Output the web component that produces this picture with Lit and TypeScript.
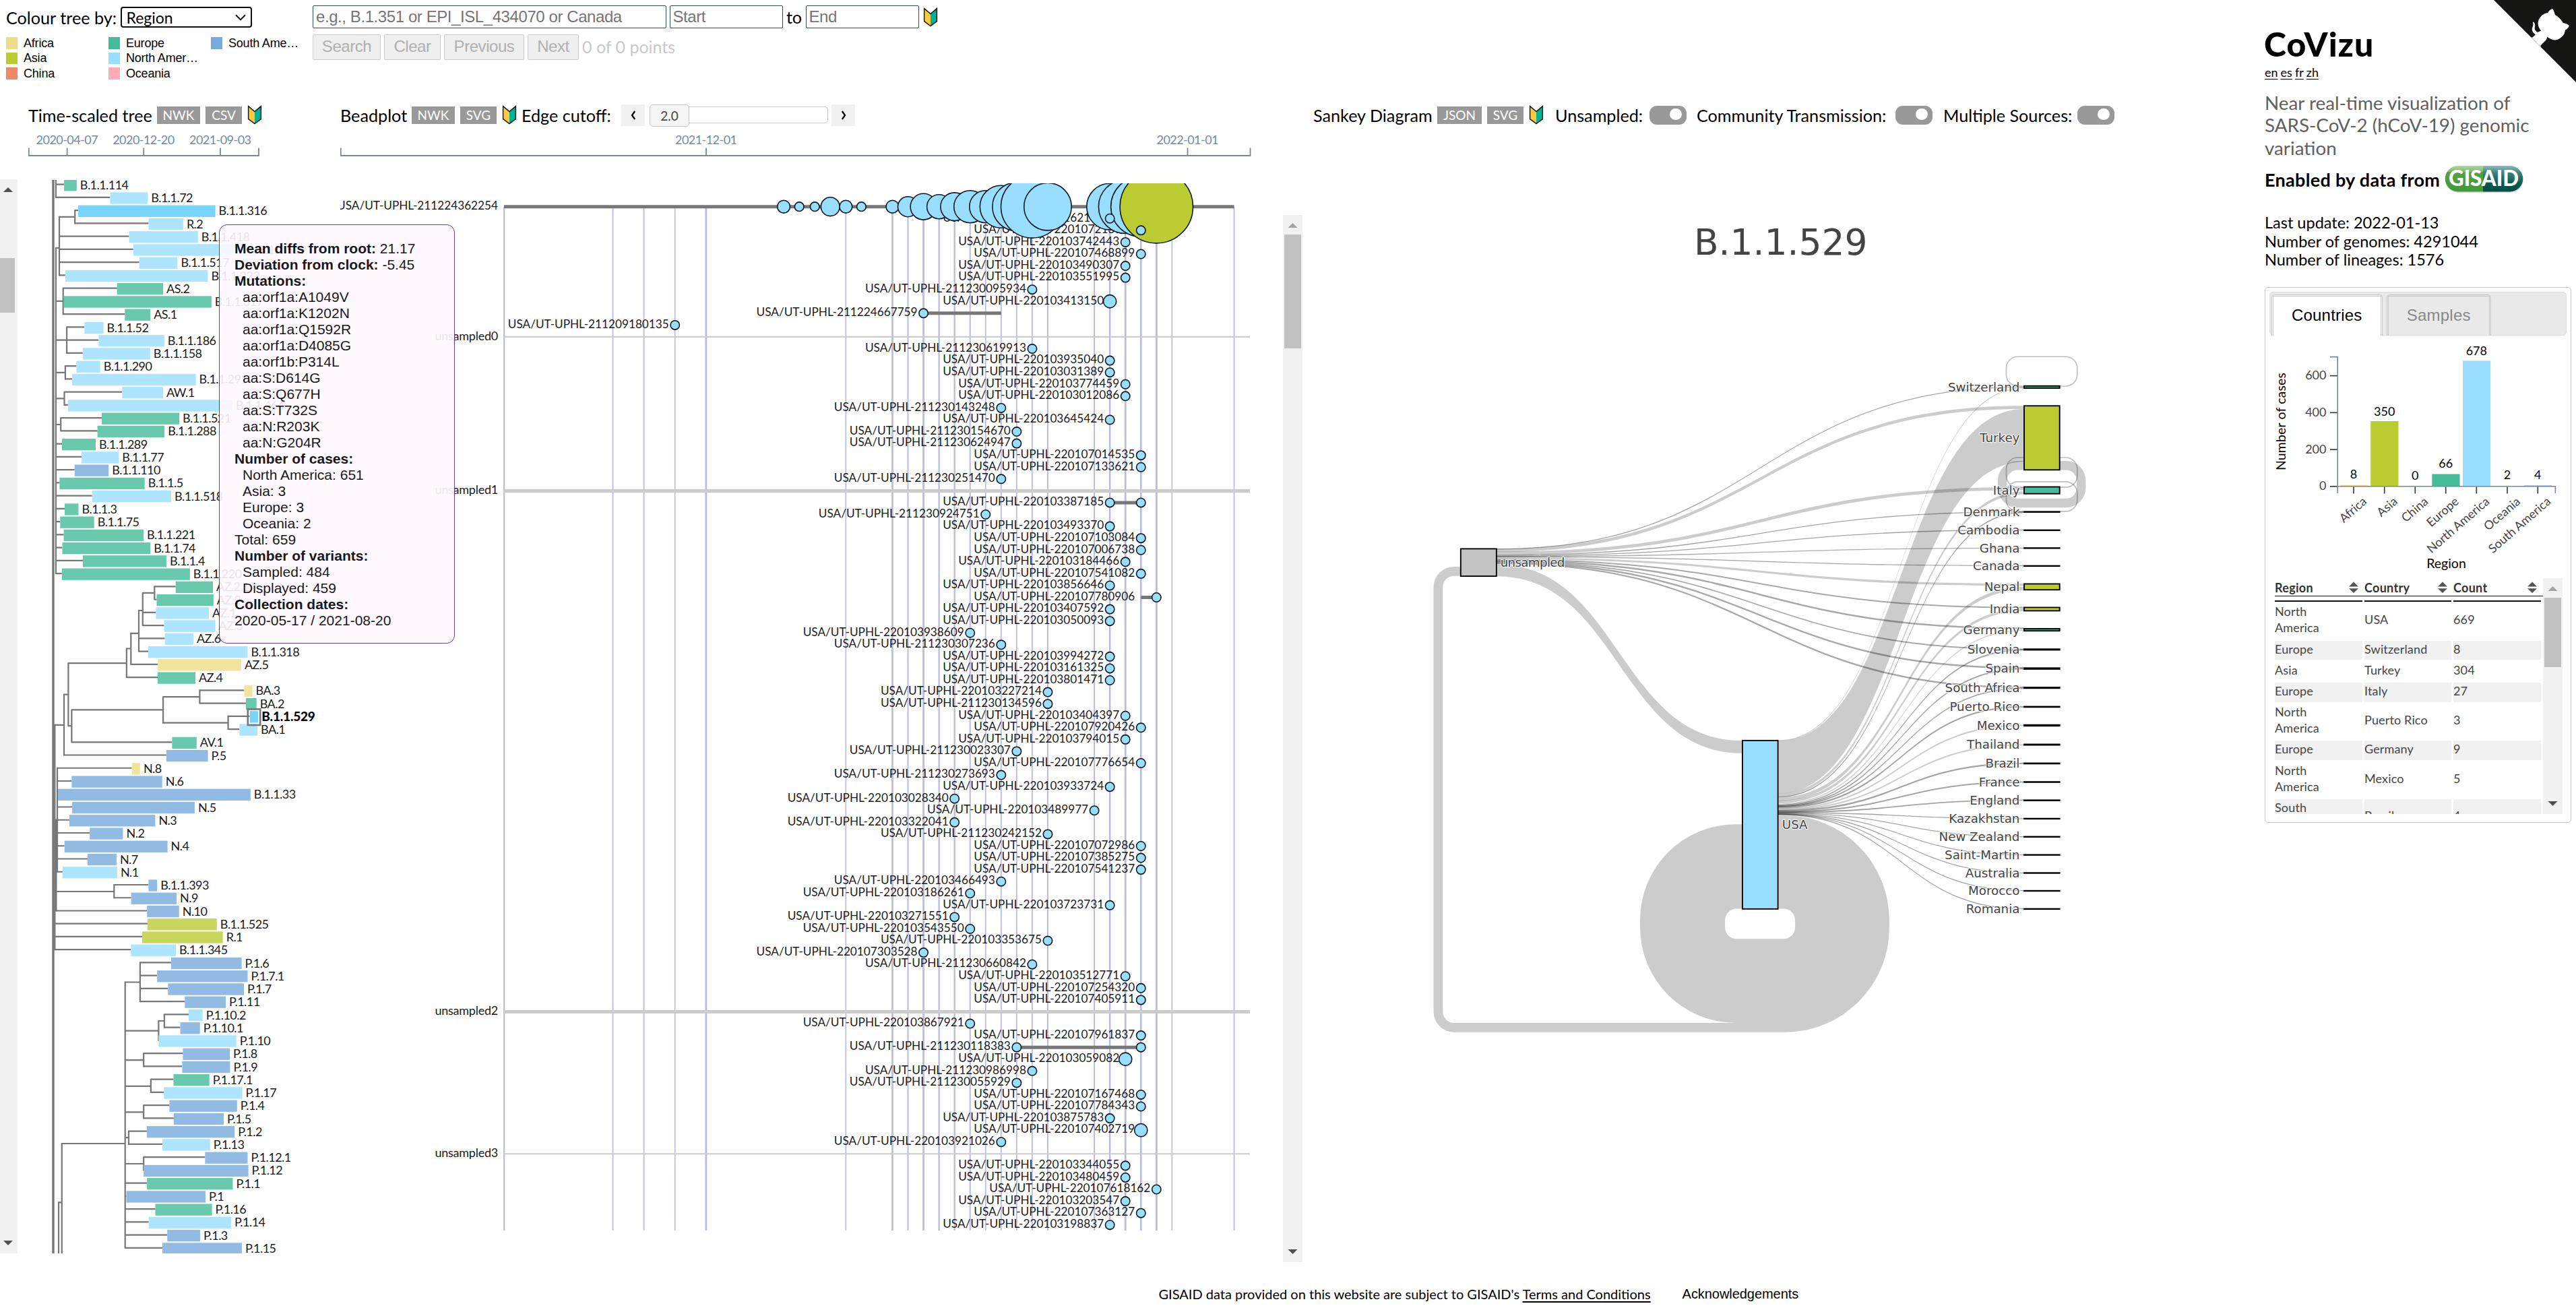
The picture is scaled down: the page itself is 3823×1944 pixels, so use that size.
import { LitElement, html, svg, css } from "lit";
import { customElement } from "lit/decorators.js";

const COLOURS: Record<string, string> = {
  Af: "#f1e4a0",
  As: "#c9d65c",
  Eu: "#69c9ad",
  NA: "#ade4ff",
  SA: "#92bbe4",
  HI: "#77d5fa",
};

/* lineage, region, first x, last x, parent x */
type Leaf = [string, string, number, number, number];
const LEAVES: Leaf[] = [
  ["B.1.1.114", "Eu", 95.1, 113.8, 83],
  ["B.1.1.72", "NA", 163.4, 219.2, 83],
  ["B.1.1.316", "HI", 116.1, 319.6, 111.2],
  ["R.2", "NA", 220.5, 271.9, 111.2],
  ["B.1.1.418", "NA", 191.5, 293.8, 88],
  ["B.1.1.519", "NA", 197.8, 378, 88],
  ["B.1.1.517", "NA", 206.7, 263.4, 88],
  ["B.1.1.222", "NA", 96.9, 308.5, 88],
  ["AS.2", "Eu", 173.7, 242, 93.7],
  ["B.1.1.317", "Eu", 94.6, 313.8, 93.7],
  ["AS.1", "Eu", 185.3, 223.2, 93.7],
  ["B.1.1.52", "NA", 125.4, 153.6, 99.1],
  ["B.1.1.186", "NA", 146.4, 243.8, 99.1],
  ["B.1.1.158", "NA", 122.8, 222.8, 99.1],
  ["B.1.1.290", "NA", 113.4, 148.7, 96.9],
  ["B.1.1.291", "NA", 107.1, 290.6, 96.9],
  ["AW.1", "NA", 181.3, 242, 95.5],
  ["B.1.1.464", "NA", 100.9, 345, 95.5],
  ["B.1.1.521", "Eu", 150.9, 266, 90.2],
  ["B.1.1.288", "Eu", 144.6, 244.2, 90.2],
  ["B.1.1.289", "Eu", 92, 142, 83],
  ["B.1.1.77", "NA", 121, 176.3, 83],
  ["B.1.1.110", "SA", 110.7, 161.2, 83],
  ["B.1.1.5", "Eu", 88.4, 214.7, 83],
  ["B.1.1.518", "NA", 136.6, 254, 83],
  ["B.1.1.3", "Eu", 96, 116.5, 83],
  ["B.1.1.75", "Eu", 89.3, 139.7, 83],
  ["B.1.1.221", "Eu", 94.6, 213, 83],
  ["B.1.1.74", "Eu", 92.5, 223.2, 83],
  ["B.1.1.4", "Eu", 122.9, 247.1, 83],
  ["B.1.1.220", "Eu", 91.8, 281.8, 83],
  ["AZ.2.1", "Eu", 260.7, 316, 229.3],
  ["AZ.2", "Eu", 232.5, 316.8, 229.3],
  ["AZ.1", "NA", 231.4, 310, 211.8],
  ["AZ.3", "NA", 243.6, 319.6, 211.8],
  ["AZ.6", "NA", 244.6, 287.1, 206],
  ["B.1.1.318", "NA", 220, 367.5, 206],
  ["AZ.5", "Af", 234.3, 357.9, 194.3],
  ["AZ.4", "Eu", 234, 290, 187.9],
  ["BA.3", "Af", 362.5, 374.6, 296.4],
  ["BA.2", "Eu", 365, 380.7, 296.4],
  ["B.1.1.529", "HI", 370.7, 383.2, 338.6],
  ["BA.1", "NA", 355.4, 382.1, 338.6],
  ["AV.1", "Eu", 255.4, 291.8, 106.4],
  ["P.5", "SA", 246.8, 308.6, 95],
  ["N.8", "Af", 195.7, 207.9, 85],
  ["N.6", "SA", 106.4, 240.7, 85],
  ["B.1.1.33", "SA", 86, 371.8, 85],
  ["N.5", "SA", 107.1, 288.9, 85],
  ["N.3", "SA", 102.9, 230.4, 85],
  ["N.2", "SA", 133.2, 182.5, 85],
  ["N.4", "SA", 95.7, 248.6, 85],
  ["N.7", "SA", 130, 172.9, 85],
  ["N.1", "NA", 92.9, 173.9, 85],
  ["B.1.1.393", "SA", 220.4, 233.2, 169.3],
  ["N.9", "SA", 194.6, 262.1, 169.3],
  ["N.10", "SA", 218.2, 265.7, 83.6],
  ["B.1.1.525", "As", 218.9, 321.8, 81.4],
  ["R.1", "As", 211, 330.7, 81.4],
  ["B.1.1.345", "NA", 194.3, 261, 81.4],
  ["P.1.6", "SA", 253.9, 358.6, 207.9],
  ["P.1.7.1", "SA", 233.2, 367.5, 207.9],
  ["P.1.7", "SA", 249.3, 362.1, 207.9],
  ["P.1.11", "SA", 274.3, 335, 207.9],
  ["P.1.10.2", "NA", 280, 300.7, 243.9],
  ["P.1.10.1", "SA", 267.5, 296.8, 243.9],
  ["P.1.10", "NA", 235.4, 350.7, 235.4],
  ["P.1.8", "SA", 271.4, 341, 213.2],
  ["P.1.9", "SA", 270.4, 341.4, 213.2],
  ["P.1.17.1", "Eu", 257.5, 310.7, 223.9],
  ["P.1.17", "NA", 243.2, 359.6, 223.9],
  ["P.1.4", "SA", 251.4, 351.8, 213.2],
  ["P.1.5", "SA", 257.9, 332, 213.2],
  ["P.1.2", "SA", 217.9, 348.2, 191],
  ["P.1.13", "NA", 241, 311.8, 191],
  ["P.1.12.1", "SA", 304.3, 367.5, 213.2],
  ["P.1.12", "SA", 213.2, 368.6, 213.2],
  ["P.1.1", "Eu", 218.2, 345.4, 185.7],
  ["P.1", "SA", 187.5, 305, 185.7],
  ["P.1.16", "Eu", 230.4, 314.6, 185.7],
  ["P.1.14", "NA", 220.7, 342.9, 185.7],
  ["P.1.3", "SA", 248.2, 297.1, 185.7],
  ["P.1.15", "SA", 241, 358.9, 185.7],
];
const leafTop = (i: number) => 266.1 + 19.246 * i;
const leafY = (i: number) => leafTop(i) + 7.6;

/* node x, top y, bottom y */
const STEMS: [number, number, number][] = [
  [83, 262, leafY(1)],
  [83, 368, leafY(30)],
  [111.2, leafY(2), leafY(3)],
  [88, 321.8, leafY(7)],
  [93.7, leafY(8), leafY(10)],
  [99.1, leafY(11), leafY(13)],
  [96.9, leafY(14), leafY(15)],
  [95.5, leafY(16), leafY(17)],
  [90.2, leafY(18), leafY(19)],
  [229.3, leafY(31), leafY(32)],
  [211.8, 879.9, leafY(34)],
  [206, 906, leafY(36)],
  [194.3, 939.8, leafY(37)],
  [187.9, 962.5, leafY(38)],
  [101.4, 984.2, 1077.2],
  [95, 1030.7, leafY(44)],
  [106.4, 1053.4, leafY(43)],
  [242.1, 1034.2, 1072.7],
  [296.4, leafY(39), leafY(40)],
  [338.6, leafY(41), leafY(42)],
  [85, leafY(45), leafY(53)],
  [83.4, 1217, leafY(56)],
  [81.4, 1075.8, leafY(59)],
  [169.3, leafY(54), leafY(55)],
  [207.9, leafY(60), leafY(63)],
  [243.9, leafY(64), leafY(65)],
  [235.4, 1515, leafY(66)],
  [213.2, leafY(67), leafY(68)],
  [223.9, leafY(69), leafY(70)],
  [213.2, leafY(71), leafY(72)],
  [191, leafY(73), leafY(74)],
  [213.2, leafY(75), leafY(76)],
  [185.7, 1457.5, leafY(82)],
  [91.8, 1697, 1864],
  [87, 1784.3, 1864],
];
/* y, start x, end x */
const BRANCHES: [number, number, number][] = [
  [321.8, 88, 111.2],
  [368, 83, 88],
  [leafY(9), 83, 93.7],
  [leafY(12), 83, 99.1],
  [552.9, 83, 96.9],
  [591.4, 83, 95.5],
  [630, 83, 90.2],
  [879.9, 211.8, 229.3],
  [906, 206, 211.8],
  [939.8, 194.3, 206],
  [962.5, 187.9, 194.3],
  [984.2, 101.4, 187.9],
  [1030.7, 95, 101.4],
  [1075.8, 81, 95],
  [1077.2, 101.4, 106.4],
  [1053.4, 106.4, 242.1],
  [1034.2, 242.1, 296.4],
  [1072.7, 242.1, 338.6],
  [1216.7, 81.4, 85],
  [1323, 83.6, 169.3],
  [1457.5, 185.7, 207.9],
  [1515, 235.4, 243.9],
  [1529.6, 185.7, 235.4],
  [1573.2, 185.7, 213.2],
  [1611.8, 185.7, 223.9],
  [1650.4, 185.7, 213.2],
  [1688.2, 185.7, 191],
  [1727, 185.7, 213.2],
  [1697, 91.8, 185.7],
  [1784.3, 87, 91.8],
];

const dayX = (d: number) => 748.2 + 23.05 * d;
const rowY = (i: number) => 306.7 + 17.57 * i;

/* sample id, day of its first case, bead radius, line end day, days with a bead */
interface Bead {
  id: string;
  day: number;
  r?: number;
  to?: number;
  beads?: number[];
}
const b = (id: string, day: number, extra: Partial<Bead> = {}): Bead => ({ id, day, ...extra });
const BEADS: (Bead | null)[] = [
  null,
  b("220103162145", 39),
  b("220107213934", 41),
  b("220103742443", 40),
  b("220107468899", 41),
  b("220103490307", 40),
  b("220103551995", 40),
  b("211230095934", 34),
  b("220103413150", 39, { r: 9.6 }),
  b("211224667759", 27, { to: 32 }),
  b("211209180135", 11),
  null,
  b("211230619913", 34),
  b("220103935040", 39),
  b("220103031389", 39),
  b("220103774459", 40),
  b("220103012086", 40),
  b("211230143248", 32),
  b("220103645424", 39),
  b("211230154670", 33),
  b("211230624947", 33),
  b("220107014535", 41),
  b("220107133621", 41),
  b("211230251470", 32),
  null,
  b("220103387185", 39, { to: 41, beads: [39, 41] }),
  b("211230924751", 31),
  b("220103493370", 39),
  b("220107103084", 41),
  b("220107006738", 41),
  b("220103184466", 40),
  b("220107541082", 41),
  b("220103856646", 39),
  b("220107780906", 41, { to: 42, beads: [42] }),
  b("220103407592", 39),
  b("220103050093", 39),
  b("220103938609", 30),
  b("211230307236", 32),
  b("220103994272", 39),
  b("220103161325", 39),
  b("220103801471", 39),
  b("220103227214", 35),
  b("211230134596", 35),
  b("220103404397", 40),
  b("220107920426", 41),
  b("220103794015", 40),
  b("211230023307", 33),
  b("220107776654", 41),
  b("211230273693", 32),
  b("220103933724", 39),
  b("220103028340", 29),
  b("220103489977", 38),
  b("220103322041", 29),
  b("211230242152", 35),
  b("220107072986", 41),
  b("220107385275", 41),
  b("220107541237", 41),
  b("220103466493", 32),
  b("220103186261", 30),
  b("220103723731", 39),
  b("220103271551", 29),
  b("220103543550", 30),
  b("220103353675", 35),
  b("220107303528", 27),
  b("211230660842", 34),
  b("220103512771", 40),
  b("220107254320", 41),
  b("220107405911", 41),
  null,
  b("220103867921", 30),
  b("220107961837", 41),
  b("211230118383", 33, { to: 41, beads: [33, 41] }),
  b("220103059082", 40, { r: 9.6 }),
  b("211230986998", 34),
  b("211230055929", 33),
  b("220107167468", 41),
  b("220107784343", 41),
  b("220103875783", 39),
  b("220107402719", 41, { r: 9.6 }),
  b("220103921026", 32),
  null,
  b("220103344055", 40),
  b("220103480459", 40),
  b("220107618162", 42),
  b("220103203547", 40),
  b("220107363127", 41),
  b("220103198837", 39),
];
/* day, radius of the beads on the first line */
const MAIN_BEADS: [number, number][] = [
  [18, 9.4], [19, 6.8], [20, 6.8], [21, 13.9], [22, 9.4], [23, 6.8], [25, 9.4],
  [26, 15], [27, 19.4], [28, 18], [29, 20.8], [30, 24], [31, 24], [32, 31.5],
  [33, 36], [34, 46.4], [35, 35.2], [39, 34.4], [40, 39.8], [41, 44.6], [42, 54.2],
];
/* day, rule width */
const RULES: [number, number][] = [
  [0, 2.2], [7, 1.8], [9, 1.8], [11, 1.6], [13, 2.8], [22, 1.7], [25, 2.7], [26, 2],
  [27, 2.7], [28, 2.3], [29, 2.3], [30, 2], [31, 1.8], [32, 1.8], [33, 1.8], [34, 1.8],
  [35, 2], [38, 2], [39, 2.5], [40, 2.8], [41, 2.8], [42, 2.9], [43, 1.7], [47, 1.8],
];
/* row, thickness */
const UNSAMPLED: [number, number][] = [[11, 2.2], [24, 5], [68, 5], [80, 2]];

/* name, centre y, half height, fill; diagram units */
const COUNTRIES: [string, number, number, string][] = [
  ["Switzerland", 137, 2.4, "#3aa587"],
  ["Turkey", 246.5, 69, "#bbcc33"],
  ["Italy", 359.5, 7.4, "#44bb99"],
  ["Denmark", 406, 0.5, "#000"],
  ["Cambodia", 445.5, 0.4, "#000"],
  ["Ghana", 484, 0.4, "#000"],
  ["Canada", 522.5, 0.4, "#000"],
  ["Nepal", 567.5, 6.4, "#bbcc33"],
  ["India", 615.5, 3.6, "#bbcc33"],
  ["Germany", 660, 2.4, "#3aa587"],
  ["Slovenia", 702.5, 0.9, "#063"],
  ["Spain", 743.5, 1.2, "#1d5a4a"],
  ["South Africa", 785, 0.9, "#543"],
  ["Puerto Rico", 826, 0.6, "#000"],
  ["Mexico", 866, 1.1, "#223"],
  ["Thailand", 907.5, 0.8, "#450"],
  ["Brazil", 948, 0.6, "#000"],
  ["France", 988, 0.5, "#000"],
  ["England", 1027.5, 0.5, "#000"],
  ["Kazakhstan", 1067, 0.4, "#000"],
  ["New Zealand", 1106, 0.4, "#000"],
  ["Saint-Martin", 1145, 0.4, "#000"],
  ["Australia", 1184, 0.4, "#000"],
  ["Morocco", 1222.5, 0.4, "#000"],
  ["Romania", 1261.5, 0.4, "#000"],
];
/* source x, source y, target x, target y, source width, target width, opacity */
type Flow = [number, number, number, number, number, number, number];
const FLOWS: Flow[] = [
  [204, 532, 734, 912.5, 26, 27, 0.2],
  [204, 486, 1341, 137, 2, 2, 0.36],
  [204, 489, 1341, 181, 7, 7, 0.2],
  [204, 495, 1341, 356, 7, 7, 0.2],
  [204, 499, 1341, 406, 2, 2, 0.36],
  [204, 501, 1341, 445, 2, 2, 0.36],
  [204, 502, 1341, 484, 2, 2, 0.32],
  [204, 503, 1341, 522, 2, 2, 0.36],
  [204, 506, 1341, 563, 4, 5, 0.2],
  [204, 509, 1341, 612, 2.8, 2.8, 0.34],
  [204, 511, 1341, 657, 3.6, 3.6, 0.34],
  [204, 513, 1341, 702, 2.8, 2.8, 0.34],
  [204, 515, 1341, 742, 3.6, 3.6, 0.34],
  [204, 517, 1341, 784, 3.4, 3.4, 0.34],
  [811, 899, 1341, 139, 2, 2, 0.2],
  [811, 956.5, 1341, 241.5, 114, 114, 0.2],
  [811, 1016, 1341, 365, 6, 6, 0.2],
  [811, 1020, 1341, 407, 2.4, 2.4, 0.4],
  [811, 1025, 1341, 571, 8, 7, 0.2],
  [811, 1031, 1341, 617, 6, 6, 0.2],
  [811, 1036, 1341, 661, 2.4, 2.4, 0.2],
  [811, 1038, 1341, 703, 2.8, 2.8, 0.36],
  [811, 1040, 1341, 744, 2.8, 2.8, 0.36],
  [811, 1041, 1341, 786, 2.8, 2.8, 0.36],
  [811, 1043, 1341, 826, 3.4, 3.4, 0.36],
  [811, 1046, 1341, 866, 3.2, 3.2, 0.2],
  [811, 1048, 1341, 908, 3.4, 3.4, 0.2],
  [811, 1050, 1341, 948, 3.4, 3.4, 0.36],
  [811, 1052, 1341, 988, 3, 3, 0.36],
  [811, 1053, 1341, 1027, 2.8, 2.8, 0.36],
  [811, 1054, 1341, 1067, 2, 2, 0.36],
  [811, 1055, 1341, 1106, 2, 2, 0.36],
  [811, 1056, 1341, 1145, 2, 2, 0.36],
  [811, 1057, 1341, 1184, 2, 2, 0.36],
  [811, 1057.5, 1341, 1222, 2, 2, 0.36],
  [811, 1058, 1341, 1261, 2, 2, 0.36],
];
const loop = (top: number, bottom: number) =>
  `M1341,${bottom} H1328 A25,25 0 0 1 1303,${bottom - 25} V${top + 25} A25,25 0 0 1 1328,${top} H1431 A25,25 0 0 1 1456,${top + 25} V${bottom - 25} A25,25 0 0 1 1431,${bottom} H1418`;

/* region, tick x, bar left, bar top, value, value baseline, fill */
const BARS: [string, number, number, number, number, number, string][] = [
  ["Africa", 3494, 3473.7, 720.7, 8, 711.3, "#eedd88"],
  ["Asia", 3539.7, 3519.3, 626, 350, 617.7, "#bbcc33"],
  ["China", 3585.3, 3564.8, 722.8, 0, 713.4, "#ee8866"],
  ["Europe", 3630.7, 3610.3, 704.5, 66, 695, "#44bb99"],
  ["North America", 3676.3, 3656, 536.3, 678, 527.7, "#99ddff"],
  ["Oceania", 3722, 3701.4, 722, 2, 712, "#ffaabb"],
  ["South America", 3767.3, 3747, 721.4, 4, 712, "#77aadd"],
];

const TABLE: [string, string, string][] = [
  ["North America", "USA", "669"],
  ["Europe", "Switzerland", "8"],
  ["Asia", "Turkey", "304"],
  ["Europe", "Italy", "27"],
  ["North America", "Puerto Rico", "3"],
  ["Europe", "Germany", "9"],
  ["North America", "Mexico", "5"],
  ["South America", "Brazil", "4"],
];

const beginnerMark = html`<svg class="mark" width="22" height="29" viewBox="-1 -1 22 29">
  <path d="M0.6,0.8 L10,8.6 V26.4 L0.6,19.6 Z" fill="#ffc83d" />
  <path d="M19.4,0.8 L10,8.6 V26.4 L19.4,19.6 Z" fill="#00b294" />
  <path d="M0.6,0.6 L10,8.6 L19.4,0.6 V19.6 L10,26.6 L0.6,19.6 Z" fill="none" stroke="#111" stroke-width="1.4" />
</svg>`;

@customElement("page-scrollbar")
class PageScrollbar extends LitElement {
  static properties = {
    width: { type: Number },
    height: { type: Number },
    start: { type: Number },
    size: { type: Number },
    offset: { type: Number },
    enabled: { type: Boolean },
  };
  declare width: number;
  declare height: number;
  declare start: number;
  declare size: number;
  declare offset: number;
  declare enabled: boolean;
  static styles = css`
    :host { display: block; flex: none; }
    svg { display: block; }
  `;
  constructor() {
    super();
    this.offset = 0;
    this.enabled = false;
  }
  render() {
    const { width: w, height: h, start, size, offset } = this;
    const c = w / 2 + offset;
    return html`<svg width=${w} height=${h}>
      <rect width=${w} height=${h} fill="#f1f1f1" />
      <rect x=${2 + offset * 2} y=${start} width=${w - 4} height=${size} fill="#c1c1c1" />
      <path d="M${c - 7},19 L${c},12 L${c + 7},19 Z" fill=${this.enabled ? "#505050" : "#a3a3a3"} />
      <path d="M${c - 7},${h - 19} L${c},${h - 12} L${c + 7},${h - 19} Z" fill="#505050" />
    </svg>`;
  }
}

@customElement("time-tree")
class TimeTree extends LitElement {
  static styles = css`
    :host { display: block; flex: none; }
    svg { display: block; font: 18px Lato, sans-serif; letter-spacing: -0.55px; fill: #1a1a1a; }
    .line { stroke: #777; stroke-width: 2.2; fill: none; }
    .picked { font-weight: 900; font-size: 19px; letter-spacing: -0.2px; fill: #000; }
  `;
  render() {
    return html`<svg width="479" height="1593" viewBox="26 267 479 1593">
      <path class="line" d=${STEMS.map(([x, a, z]) => `M${x},${a - 1}V${z + 1}`).join("")} />
      <path class="line" d=${BRANCHES.map(([y, a, z]) => `M${a},${y}H${z}`).join("")} />
      <path class="line" d=${LEAVES.map((l, i) => `M${l[4]},${leafY(i)}H${Math.max(l[2], l[4])}`).join("")} />
      <path d="M79,262V1864" stroke="#777" stroke-width="3.4" />
      ${LEAVES.map(
        ([name, region, a, z], i) => svg`
          <rect x=${a} y=${leafTop(i)} width=${z - a} height="17.3" fill=${COLOURS[region]} />
          <text x=${z + 5} y=${leafTop(i) + 14.7} class=${name === "B.1.1.529" ? "picked" : ""}>${name}</text>`
      )}
      <rect x="367.8" y="1052.4" width="18.4" height="23.6" fill="none" stroke="#777" stroke-width="2.6" />
    </svg>`;
  }
}

@customElement("bead-plot")
class BeadPlot extends LitElement {
  static styles = css`
    :host { display: block; flex: none; }
    svg { display: block; font: 18px Lato, sans-serif; }
    text { text-anchor: end; fill: #1a1a1a; }
    .group { letter-spacing: -0.25px; }
    .bead { fill: #99ddff; stroke: #0d1a1f; stroke-width: 1.6; }
    .asia { fill: #bbcc33; }
    .edge { stroke: #777; stroke-width: 5; }
  `;
  render() {
    return html`<svg width="1355" height="1601" viewBox="505 272 1355 1601">
      ${RULES.map(([d, w]) => svg`<path d="M${dayX(d)},${rowY(0)}V1826" stroke="#bbbbdd" stroke-width=${w} />`)}
      ${UNSAMPLED.map(
        ([row, w], i) => svg`
          <path d="M748,${rowY(row)}H1855" stroke="#ccc" stroke-width=${w} />
          <text class="group" x="739" y=${rowY(row) + 5}>unsampled${i}</text>`
      )}
      <path class="edge" d="M748,${rowY(0)}H${dayX(47)}" />
      <text x="739" y=${rowY(0) + 4.6} textLength="239" lengthAdjust="spacingAndGlyphs">USA/UT-UPHL-211224362254</text>
      ${BEADS.map((s, i) =>
        s
          ? svg`
            ${s.to ? svg`<path class="edge" d="M${dayX(s.day)},${rowY(i)}H${dayX(s.to)}" />` : null}
            <text x=${dayX(s.day) - 9} y=${rowY(i) + 4.3} textLength="239" lengthAdjust="spacingAndGlyphs">USA/UT-UPHL-${s.id}</text>`
          : null
      )}
      ${MAIN_BEADS.map(([d, r]) => svg`<circle class="bead ${d === 42 ? "asia" : ""}" cx=${dayX(d)} cy=${rowY(0)} r=${r} />`)}
      ${BEADS.map((s, i) =>
        s ? (s.beads ?? [s.day]).map((d) => svg`<circle class="bead" cx=${dayX(d)} cy=${rowY(i)} r=${s.r ?? 6.7} />`) : null
      )}
    </svg>`;
  }
}

@customElement("sankey-diagram")
class SankeyDiagram extends LitElement {
  static styles = css`
    :host { display: block; flex: none; }
    svg { display: block; font-family: "DejaVu Sans", Verdana, sans-serif; font-size: 26.5px; fill: #444; }
    .title { font-size: 77px; text-anchor: middle; }
    .name { text-anchor: end; }
    .label { paint-order: stroke; stroke: #fff; stroke-width: 3.4px; stroke-linejoin: round; stroke-opacity: 0.85; }
    .node { stroke: #000; stroke-width: 2.7; }
    .loop { fill: none; stroke: #000; stroke-opacity: 0.25; stroke-width: 2.4; }
  `;
  render() {
    return html`<svg width="1080" height="1260" viewBox="0 -261.3 1568 1829.3">
      <text class="title" x="817" y="-148" textLength="374" lengthAdjust="spacingAndGlyphs">B.1.1.529</text>
      ${FLOWS.map(([x0, y0, x1, y1, w0, w1, o]) => {
        const m = (x0 + x1) / 2;
        const s = w0 / 2;
        const t = w1 / 2;
        return svg`<path fill="#000" fill-opacity=${o}
          d="M${x0},${y0 - s} C${m},${y0 - s} ${m},${y1 - t} ${x1},${y1 - t} V${y1 + t} C${m},${y1 + t} ${m},${y0 + s} ${x0},${y0 + s} Z" />`;
      })}
      <path fill="#000" fill-opacity="0.2" d="M811,1060 H826 A225,226 0 0 1 1051,1286 V1302 A225,225 0 0 1 826,1527 H113 A44,44 0 0 1 69,1483 V568 A44,44 0 0 1 113,524 H127 V544 H113 A24,24 0 0 0 89,568 V1483 A24,24 0 0 0 113,1507 H720 A206,206 0 0 1 514,1301 V1285 A206,206 0 0 1 720,1079 H734 V1261 H722 A25,25 0 0 0 697,1286 V1301 A25,25 0 0 0 722,1326 H823 A25,25 0 0 0 848,1301 V1286 A25,25 0 0 0 823,1261 H811 Z" />
      <path fill="none" stroke="#000" stroke-opacity="0.2" stroke-width="19.5" d="M1341,306 H1327 A33,33 0 0 0 1294.5,339 V354 A33,33 0 0 0 1327,387 H1431 A33,33 0 0 0 1464.5,354 V339 A33,33 0 0 0 1431,306 H1418" />
      <path class="loop" d=${loop(71.5, 135)} />
      <path class="loop" d=${loop(289, 353)} />
      <path class="loop" d=${loop(341, 405)} />
      <rect class="node" x="127.5" y="485.5" width="77" height="59" fill="#c3c3c3" />
      <rect class="node" x="734.5" y="898.5" width="76.5" height="363" fill="#99ddff" />
      ${COUNTRIES.map(
        ([name, y, h, fill]) => svg`
          <rect class="node" x="1341.5" y=${y - h} width="76.5" height=${h * 2} fill=${fill} />
          <text class="name label" x="1332" y=${y + 9.2}>${name}</text>`
      )}
      <text class="label" x="213" y="524" textLength="139">unsampled</text>
      <text class="label" x="820" y="1089">USA</text>
    </svg>`;
  }
}

@customElement("case-chart")
class CaseChart extends LitElement {
  static styles = css`
    :host { display: block; }
    svg { display: block; font: 18px Lato, sans-serif; }
    .axis { fill: none; stroke: #778899; stroke-width: 1.6; }
    .tick { stroke: #333; stroke-width: 1.6; }
    .num { text-anchor: end; fill: #444; }
    .val { text-anchor: middle; }
    .cat { text-anchor: end; fill: #444; }
    .name { font-size: 19.5px; text-anchor: middle; }
  `;
  render() {
    return html`<svg width="440" height="359" viewBox="3369 499 440 359">
      ${BARS.map(([, , x, y, , , fill]) => svg`<rect x=${x} y=${y} width="41.2" height=${722.8 - y} fill=${fill} />`)}
      <path class="axis" d="M3459,530.6H3470.2V733" />
      <path class="axis" d="M3470,722.8H3793.4V733" />
      ${[600, 400, 200, 0].map((v, i) => {
        const y = 558.6 + i * 54.75;
        return svg`<path class="tick" d="M3459,${y}H3469.5" /><text class="num" x="3453.5" y=${y + 5.6}>${v}</text>`;
      })}
      ${BARS.map(
        ([name, x, , , v, ty]) => svg`
          <path class="tick" d="M${x},723.5V733.5" />
          <text class="val" x=${x} y=${ty}>${v}</text>
          <text class="cat" transform="translate(${x + 20.5},747) rotate(-41)">${name}</text>`
      )}
      <text class="name" x="3631.5" y="843.6">Region</text>
      <text class="name" transform="translate(3393,626.6) rotate(-90)" textLength="145">Number of cases</text>
    </svg>`;
  }
}

@customElement("app-root")
class AppRoot extends LitElement {
  static styles = css`
    :host {
      display: block;
      width: 3823px;
      height: 1944px;
      overflow: hidden;
      background: #fff;
      color: #000;
      font: 25.2px/30px Lato, sans-serif;
      position: relative;
    }
    * { box-sizing: border-box; }
    svg { display: block; flex: none; }
    .page { display: grid; grid-template-columns: 3361px 462px; grid-template-rows: 1873px 71px; }
    .top { display: flex; height: 130px; }
    .colour { width: 464px; padding: 10px 0 0 9px; }
    .pick { display: flex; align-items: center; height: 31px; white-space: nowrap; }
    .pick-label { width: 169.5px; }
    .select {
      display: flex; align-items: center; justify-content: space-between;
      width: 195px; height: 31px; padding: 0 7px 0 7px;
      border: 2px solid #101010; border-radius: 4px; font-size: 23px; line-height: 26px;
    }
    .legend {
      display: grid; grid-template-columns: repeat(3, 152px); grid-template-rows: repeat(3, 22.6px);
      grid-auto-flow: column; margin-top: 11.5px;
      font: 18px/22.6px "Liberation Sans", Arial, sans-serif; letter-spacing: -0.2px;
    }
    .key { display: flex; align-items: center; gap: 9px; white-space: nowrap; }
    .swatch { width: 17px; height: 17.6px; }
    .row { display: flex; align-items: center; white-space: nowrap; }
    .query { padding-top: 8px; }
    .field {
      height: 34px; border: 1.5px solid #2f4f4f; border-radius: 2px; padding: 0 4px;
      color: #757575; font: 24px/31px "Liberation Sans", Arial, sans-serif; letter-spacing: -0.42px;
    }
    .wide { width: 525px; margin-right: 4.5px; }
    .short { width: 168px; }
    .to { width: 34px; text-align: center; }
    .query .mark { margin-left: 6px; }
    .buttons { margin-top: 9px; gap: 5px; height: 38px; }
    .button {
      height: 38px; border: 1px solid #ccc; border-radius: 2px; background: #efefef; color: #b0b0b0;
      font: 24px/34px "Liberation Sans", Arial, sans-serif; text-align: center; letter-spacing: -0.45px;
    }
    .search { width: 101px; }
    .clear { width: 84px; }
    .previous { width: 119px; }
    .next { width: 76px; }
    .points { color: #c8c8c8; font-size: 25px; padding-bottom: 2px; }
    .bars { display: grid; grid-template-columns: 463px 1444px 1fr; height: 112px; padding: 20px 0 0 42px; }
    .bar { height: 41px; }
    .badge {
      height: 26px; background: #999; color: #fff; font-size: 19px; line-height: 26px; text-align: center;
      margin-right: 8px;
    }
    .nwk { width: 64px; }
    .json { width: 66px; }
    .csv { width: 54px; }
    .title { margin-right: 7px; }
    .t-tree { width: 184px; }
    .t-bead { width: 99px; }
    .t-sankey { width: 177px; }
    .edge-label { width: 155px; padding-left: 7px; }
    .step { width: 35px; height: 32px; background: #f1f1f1; display: grid; place-items: center; }
    .slider { width: 265px; height: 25px; margin: 0 5px 0 7px; border: 1px solid #c5c5c5; border-radius: 5px; position: relative; }
    .handle {
      position: absolute; left: -1px; top: -4px; width: 59px; height: 33px; border: 1px solid #c5c5c5;
      border-radius: 5px; background: #f6f6f6; color: #454545; font-size: 19px; line-height: 31px; text-align: center;
    }
    .switch { width: 55px; height: 28px; border-radius: 11px; background: #999; padding: 4.5px 7px; display: flex; justify-content: flex-end; }
    .knob { width: 18px; height: 17px; border-radius: 9px; background: #fff; }
    .s1 { width: 140px; margin-left: 17px; }
    .s2 { width: 295px; margin-left: 15px; }
    .s3 { width: 199px; margin-left: 16px; }
    .axis text { fill: #778899; font: 18px Lato, sans-serif; text-anchor: middle; }
    .axis path { fill: none; stroke: #778899; stroke-width: 1.8; }
    .plots { display: flex; align-items: flex-start; padding-top: 20px; height: 1631px; }
    .tree-scroll { margin-top: 4px; }
    time-tree { margin-top: 5px; }
    bead-plot { margin-top: 10px; }
    .bead-scroll { margin: 57px 147px 0 44px; }
    sankey-diagram { margin-top: 38px; }
    .side { position: relative; }
    .corner { position: absolute; right: 0; top: 0; }
    .brand { font-size: 50px; font-weight: 900; line-height: 58px; padding-top: 36px; height: 95px; letter-spacing: 1.1px; margin-left: -1px; }
    .langs { display: flex; gap: 4px; font-size: 18px; line-height: 24px; }
    .lang { text-decoration: underline; text-underline-offset: 3px; }
    .lead { color: #606060; font-size: 27.8px; line-height: 33.6px; margin: 16.5px 0 0; width: 410px; }
    .enabled { display: flex; align-items: center; gap: 5px; font-size: 27px; font-weight: 700; margin-top: 8.7px; height: 42px; white-space: nowrap; }
    .enabled-text { width: 262px; letter-spacing: 0.3px; padding-top: 3px; }
    .stats { margin-top: 30.1px; line-height: 27.5px; font-size: 23.5px; }
    .card { width: 454.5px; height: 795px; margin-top: 26.2px; border: 1px solid #c5c5c5; border-radius: 5px; padding: 6px 6px; }
    .tabs {
      display: flex; align-items: flex-end; gap: 6px; height: 65px; padding-left: 2px;
      background: #e9e9e9; border: 1px solid #ddd; border-radius: 5px;
      font: 24px/56px "Liberation Sans", Arial, sans-serif;
    }
    .tab { height: 61px; border: 1px solid #c5c5c5; border-bottom: 0; border-radius: 5px 5px 0 0; padding: 1px 1px 0; margin-bottom: -1px; }
    .inner { height: 100%; border: 1px solid #c5c5c5; border-bottom: 0; text-align: center; letter-spacing: 0.2px; }
    .on { width: 164.5px; background: #fff; }
    .off { width: 155.5px; color: #888; }
    .table-box { display: flex; height: 350px; overflow: hidden; padding-left: 8px; margin-top: 1px; }
    .table { width: 398px; color: #444; font-size: 18px; line-height: 24px; }
    .head { display: grid; grid-template-columns: 130px 129px 130px; column-gap: 3px; height: 27.5px; border-bottom: 1.5px solid #111; font-weight: 700; color: #333; padding-top: 2px; letter-spacing: 0.3px; }
    .th { display: flex; justify-content: space-between; align-items: center; padding-right: 6px; }
    .body { display: grid; grid-template-columns: 130px 129px 130px; column-gap: 3px; row-gap: 2.7px; }
    .rule { height: 1.5px; background: #111; margin-top: 6px; }
    .td { display: flex; align-items: center; padding: 0 20px 4.5px 0; letter-spacing: 0.15px; }
    .odd { background: #f1f1f1; }
    .footer {
      grid-column: 1 / 3; display: flex; align-items: flex-start; gap: 47px; padding: 33px 0 0 1719.5px;
      font-size: 20px; line-height: 28px; white-space: nowrap;
    }
    .terms { text-decoration: underline; text-underline-offset: 3px; }
    .ack { font: 20px/28px "Liberation Sans", Arial, sans-serif; letter-spacing: -0.05px; }
    .tooltip {
      position: absolute; left: 325px; top: 333px; width: 350px; height: 622px; padding: 23px 22px;
      border: 1.5px solid #5a2d91; border-radius: 12px; background: #fff9ff; opacity: 0.9;
      font: 21px/24px "Liberation Sans", Arial, sans-serif; white-space: nowrap;
    }
    .in { padding-left: 12px; }
  `;

  private switchBox() {
    return html`<div class="switch"><div class="knob"></div></div>`;
  }

  private sorter() {
    return html`<svg width="14" height="18" viewBox="0 0 14 18">
      <path d="M0,7.4 L7,0.5 L14,7.4 Z M0,10.2 L7,17 L14,10.2 Z" fill="#555" />
    </svg>`;
  }

  render() {
    const legend: [string, string][] = [
      ["#eedd88", "Africa"],
      ["#bbcc33", "Asia"],
      ["#ee8866", "China"],
      ["#44bb99", "Europe"],
      ["#99ddff", "North Amer…"],
      ["#ffaabb", "Oceania"],
      ["#77aadd", "South Ame…"],
    ];
    const mutations = ["orf1a:A1049V", "orf1a:K1202N", "orf1a:Q1592R", "orf1a:D4085G", "orf1b:P314L", "S:D614G", "S:Q677H", "S:T732S", "N:R203K", "N:G204R"];
    return html`
      <div class="page">
        <div class="main">
          <div class="top">
            <div class="colour">
              <div class="pick">
                <div class="pick-label">Colour tree by:</div>
                <div class="select">
                  <span>Region</span>
                  <svg width="16" height="10" viewBox="0 0 16 10"><path d="M1,1.2 L8,8.4 L15,1.2" fill="none" stroke="#111" stroke-width="2" /></svg>
                </div>
              </div>
              <div class="legend">
                ${legend.map(([c, t]) => html`<div class="key"><svg class="swatch"><rect width="17" height="18" fill=${c} /></svg>${t}</div>`)}
              </div>
            </div>
            <div class="query">
              <div class="row">
                <div class="field wide">e.g., B.1.351 or EPI_ISL_434070 or Canada</div>
                <div class="field short">Start</div>
                <div class="to">to</div>
                <div class="field short">End</div>
                ${beginnerMark}
              </div>
              <div class="row buttons">
                <div class="button search">Search</div>
                <div class="button clear">Clear</div>
                <div class="button previous">Previous</div>
                <div class="button next">Next</div>
                <div class="points">0 of 0 points</div>
              </div>
            </div>
          </div>

          <div class="bars">
            <div>
              <div class="row bar">
                <div class="title t-tree">Time-scaled tree</div>
                <div class="badge nwk">NWK</div>
                <div class="badge csv">CSV</div>
                ${beginnerMark}
              </div>
              <svg class="axis" width="420" height="45" viewBox="42 191 420 45">
                <path d="M42.8,219.5V231H384V219.5 M99.6,219.5V231 M213.2,219.5V231 M327,219.5V231" />
                <text x="99.6" y="213.6" textLength="92">2020-04-07</text>
                <text x="213.2" y="213.6" textLength="92">2020-12-20</text>
                <text x="327" y="213.6" textLength="92">2021-09-03</text>
              </svg>
            </div>
            <div>
              <div class="row bar">
                <div class="title t-bead">Beadplot</div>
                <div class="badge nwk">NWK</div>
                <div class="badge csv">SVG</div>
                ${beginnerMark}
                <div class="edge-label">Edge cutoff:</div>
                <div class="step"><svg width="8" height="14" viewBox="0 0 8 14"><path d="M6.2,1 L2,7 L6.2,13" fill="none" stroke="#000" stroke-width="2.2" /></svg></div>
                <div class="slider"><div class="handle">2.0</div></div>
                <div class="step"><svg width="8" height="14" viewBox="0 0 8 14"><path d="M1.8,1 L6,7 L1.8,13" fill="none" stroke="#000" stroke-width="2.2" /></svg></div>
              </div>
              <svg class="axis" width="1360" height="45" viewBox="505 191 1360 45">
                <path d="M505.8,219.5V231H1855.5V219.5 M1048,219.5V231 M1762.5,219.5V231" />
                <text x="1048" y="213.6" textLength="92">2021-12-01</text>
                <text x="1762.5" y="213.6" textLength="92">2022-01-01</text>
              </svg>
            </div>
            <div class="row bar">
              <div class="title t-sankey">Sankey Diagram</div>
              <div class="badge json">JSON</div>
              <div class="badge csv">SVG</div>
              ${beginnerMark}
              <div class="s1">Unsampled:</div>
              ${this.switchBox()}
              <div class="s2">Community Transmission:</div>
              ${this.switchBox()}
              <div class="s3">Multiple Sources:</div>
              ${this.switchBox()}
            </div>
          </div>

          <div class="plots">
            <page-scrollbar class="tree-scroll" width="26" height="1594" start="117" size="81" offset="-1" enabled></page-scrollbar>
            <time-tree></time-tree>
            <bead-plot></bead-plot>
            <page-scrollbar class="bead-scroll" width="29" height="1554" start="29" size="169"></page-scrollbar>
            <sankey-diagram></sankey-diagram>
          </div>
        </div>

        <div class="side">
          <svg class="corner" width="122" height="122" viewBox="0 0 250 250">
            <path d="M0,0 L250,250 V0 Z" fill="#151513" />
            <g fill="#fff" transform="translate(129,129) scale(1.15) translate(-129,-129)">
              <path d="M128.3,109.0 C113.8,99.7 119.0,89.6 119.0,89.6 C122.0,82.7 120.5,78.6 120.5,78.6 C119.2,72.0 123.4,76.3 123.4,76.3 C127.3,80.9 125.5,87.3 125.5,87.3 C122.9,97.6 130.6,101.9 134.4,103.2" />
              <path d="M115.0,115.0 C114.9,115.1 118.7,116.5 119.8,115.4 L133.7,101.6 C136.9,99.2 139.9,98.4 142.2,98.6 C133.8,88.0 127.5,74.4 143.8,58.0 C148.5,53.4 154.0,51.2 159.7,51.0 C160.3,49.4 163.2,43.6 171.4,40.1 C171.4,40.1 176.1,42.5 178.8,56.2 C183.1,58.6 187.2,61.8 190.9,65.4 C194.5,69.0 197.7,73.2 200.1,77.6 C213.8,80.2 216.3,84.9 216.3,84.9 C212.7,93.1 206.9,96.0 205.4,96.6 C205.1,102.4 203.0,107.8 198.3,112.5 C181.9,128.9 168.3,122.5 157.7,114.1 C157.9,116.9 156.7,120.9 152.7,124.9 L141.0,136.5 C139.8,137.7 141.6,141.9 141.8,141.8 Z" />
            </g>
          </svg>
          <div class="brand">CoVizu</div>
          <div class="langs">${["en", "es", "fr", "zh"].map((l) => html`<span class="lang">${l}</span>`)}</div>
          <p class="lead">Near real-time visualization of SARS-CoV-2 (hCoV-19) genomic variation</p>
          <div class="enabled">
            <div class="enabled-text">Enabled by data from</div>
            <svg width="118" height="42" viewBox="0 0 118 42">
              <defs>
                <linearGradient id="green" x1="0" y1="0" x2="0" y2="1">
                  <stop offset="0" stop-color="#b4d6a8" /><stop offset="0.22" stop-color="#7db96a" /><stop offset="0.26" stop-color="#55a044" /><stop offset="1" stop-color="#419a35" />
                </linearGradient>
                <linearGradient id="teal" x1="0" y1="0" x2="0" y2="1">
                  <stop offset="0" stop-color="#94bdbb" /><stop offset="0.25" stop-color="#3f8580" /><stop offset="0.7" stop-color="#045a50" /><stop offset="1" stop-color="#024c43" />
                </linearGradient>
              </defs>
              <rect x="1" y="3" width="116" height="38" rx="19" fill="#bbb" opacity="0.5" />
              <path d="M57,1 H20 A19,19 0 0 0 20,39.5 H57 Z" fill="url(#green)" />
              <path d="M57,1 H97 A19,19 0 0 1 97,39.5 H57 Z" fill="url(#teal)" />
              <text x="58" y="31" text-anchor="middle" textLength="104" lengthAdjust="spacingAndGlyphs" font-family="Lato, sans-serif" font-weight="900" font-size="32" fill="#fff">GISAID</text>
            </svg>
          </div>
          <div class="stats">
            <div>Last update: 2022-01-13</div>
            <div>Number of genomes: 4291044</div>
            <div>Number of lineages: 1576</div>
          </div>
          <div class="card">
            <div class="tabs">
              <div class="tab on"><div class="inner">Countries</div></div>
              <div class="tab off"><div class="inner">Samples</div></div>
            </div>
            <case-chart></case-chart>
            <div class="table-box">
              <div class="table">
                <div class="head">
                  ${["Region", "Country", "Count"].map((t) => html`<div class="th">${t}${this.sorter()}</div>`)}
                </div>
                <div class="body">
                  ${[0, 1, 2].map(() => html`<div class="rule"></div>`)}
                  ${TABLE.map((r, i) => r.map((c) => html`<div class="td ${i % 2 ? "odd" : ""}">${c}</div>`))}
                </div>
              </div>
              <page-scrollbar width="29" height="350" start="29" size="103"></page-scrollbar>
            </div>
          </div>
        </div>

        <div class="footer">
          <div>GISAID data provided on this website are subject to GISAID's <span class="terms">Terms and Conditions</span></div>
          <div class="ack">Acknowledgements</div>
        </div>
      </div>

      <div class="tooltip">
        <div><b>Mean diffs from root:</b> 21.17</div>
        <div><b>Deviation from clock:</b> -5.45</div>
        <div><b>Mutations:</b></div>
        ${mutations.map((m) => html`<div class="in">aa:${m}</div>`)}
        <div><b>Number of cases:</b></div>
        ${["North America: 651", "Asia: 3", "Europe: 3", "Oceania: 2"].map((m) => html`<div class="in">${m}</div>`)}
        <div>Total: 659</div>
        <div><b>Number of variants:</b></div>
        <div class="in">Sampled: 484</div>
        <div class="in">Displayed: 459</div>
        <div><b>Collection dates:</b></div>
        <div>2020-05-17 / 2021-08-20</div>
      </div>
    `;
  }
}
